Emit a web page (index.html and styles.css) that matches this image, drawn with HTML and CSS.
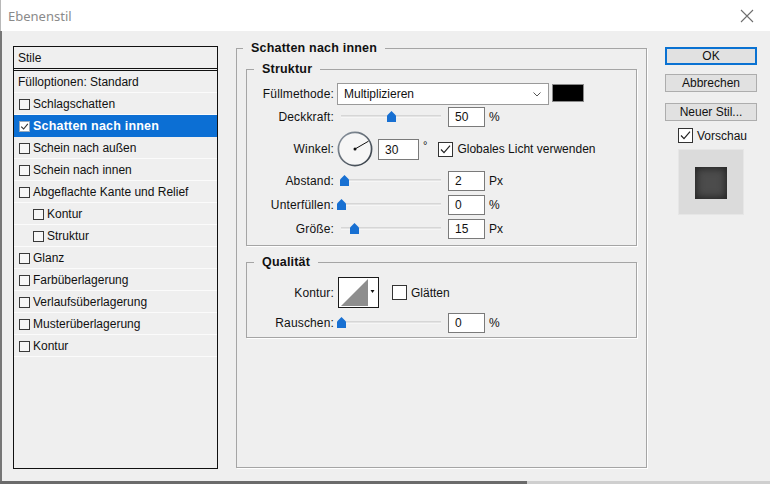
FILE: index.html
```html
<!DOCTYPE html>
<html lang="de">
<head>
<meta charset="utf-8">
<title>Ebenenstil</title>
<link rel="stylesheet" href="styles.css">
</head>
<body>
<div class="window">
  <header class="titlebar">
    <span class="title">Ebenenstil</span>
    <svg class="close" width="14" height="14" viewBox="0 0 14 14"><path d="M1 1L13 13M13 1L1 13" stroke="#6e6e6e" stroke-width="1.1" fill="none"/></svg>
  </header>
  <main class="body">
    <nav class="styles">
      <div class="styles-head">Stile</div>
      <div class="row first">Fülloptionen: Standard</div>
      <div class="row"><span class="cb"></span>Schlagschatten</div>
      <div class="row sel"><span class="cb on"><svg width="9" height="9" viewBox="0 0 9 9"><path d="M1.2 4.6L3.6 7L7.8 1.8" stroke="#333" stroke-width="1.1" fill="none"/></svg></span>Schatten nach innen</div>
      <div class="row"><span class="cb"></span>Schein nach außen</div>
      <div class="row"><span class="cb"></span>Schein nach innen</div>
      <div class="row"><span class="cb"></span>Abgeflachte Kante und Relief</div>
      <div class="row sub"><span class="cb"></span>Kontur</div>
      <div class="row sub"><span class="cb"></span>Struktur</div>
      <div class="row"><span class="cb"></span>Glanz</div>
      <div class="row"><span class="cb"></span>Farbüberlagerung</div>
      <div class="row"><span class="cb"></span>Verlaufsüberlagerung</div>
      <div class="row"><span class="cb"></span>Musterüberlagerung</div>
      <div class="row"><span class="cb"></span>Kontur</div>
    </nav>

    <fieldset class="group outer">
      <legend>Schatten nach innen</legend>

      <fieldset class="group inner struktur">
        <legend>Struktur</legend>
        <div class="frow r-mode">
          <span class="lbl">Füllmethode:</span>
          <div class="select"><span>Multiplizieren</span><svg width="8" height="5" viewBox="0 0 8 5"><path d="M0.5 0.5L4 4L7.5 0.5" stroke="#555" fill="none"/></svg></div>
          <span class="swatch"></span>
        </div>
        <div class="frow r-opacity">
          <span class="lbl">Deckkraft:</span>
          <div class="slider"><span class="track"></span><span class="thumb" style="left: 50px"></span></div>
          <span class="num">50</span><span class="unit">%</span>
        </div>
        <div class="frow r-angle">
          <span class="lbl">Winkel:</span>
          <svg class="dial" width="36" height="36" viewBox="0 0 36 36">
            <defs><linearGradient id="dg" x1="0" y1="0" x2="1" y2="1"><stop offset="0" stop-color="#8e98a3"/><stop offset="1" stop-color="#323a42"/></linearGradient></defs>
            <circle cx="18" cy="18" r="16.6" fill="#f6f6f6" stroke="url(#dg)" stroke-width="1.7"/>
            <line x1="18" y1="18" x2="31.5" y2="10.2" stroke="#111" stroke-width="1"/>
            <circle cx="18" cy="18" r="1.5" fill="#111"/>
          </svg>
          <span class="num angle">30</span><span class="deg">°</span>
          <span class="check big on"><svg width="13" height="13" viewBox="0 0 13 13"><path d="M2 6.5L5 9.6L11 2.6" stroke="#222" stroke-width="1.2" fill="none"/></svg></span>
          <span class="clabel">Globales Licht verwenden</span>
        </div>
        <div class="frow r-s">
          <span class="lbl">Abstand:</span>
          <div class="slider"><span class="track"></span><span class="thumb" style="left: 3px"></span></div>
          <span class="num">2</span><span class="unit">Px</span>
        </div>
        <div class="frow r-s">
          <span class="lbl">Unterfüllen:</span>
          <div class="slider"><span class="track"></span><span class="thumb" style="left: 0px"></span></div>
          <span class="num">0</span><span class="unit">%</span>
        </div>
        <div class="frow r-s">
          <span class="lbl">Größe:</span>
          <div class="slider"><span class="track"></span><span class="thumb" style="left: 13px"></span></div>
          <span class="num">15</span><span class="unit">Px</span>
        </div>
      </fieldset>

      <fieldset class="group inner quali">
        <legend>Qualität</legend>
        <div class="frow r-contour">
          <span class="lbl">Kontur:</span>
          <svg class="contour" width="41" height="31" viewBox="0 0 41 31">
            <rect x="0.5" y="0.5" width="40" height="30" fill="#fff" stroke="#1a1a1a"/>
            <polygon points="3,29 30,2 30,29" fill="#8e8e8e"/>
            <polygon points="32.5,13 36.5,13 34.5,16" fill="#111"/>
          </svg>
          <span class="check big glatt"></span>
          <span class="clabel">Glätten</span>
        </div>
        <div class="frow r-noise">
          <span class="lbl">Rauschen:</span>
          <div class="slider"><span class="track"></span><span class="thumb" style="left: 0px"></span></div>
          <span class="num">0</span><span class="unit">%</span>
        </div>
      </fieldset>
    </fieldset>

    <aside class="actions">
      <div class="btn primary">OK</div>
      <div class="btn">Abbrechen</div>
      <div class="btn">Neuer Stil...</div>
      <div class="preview-toggle">
        <span class="check big on"><svg width="13" height="13" viewBox="0 0 13 13"><path d="M2 6.5L5 9.6L11 2.6" stroke="#222" stroke-width="1.2" fill="none"/></svg></span>
        <span class="clabel">Vorschau</span>
      </div>
      <div class="preview"><div class="preview-square"></div></div>
    </aside>
  </main>
  <div class="strip"><span class="strip-dark"></span><span class="strip-light"></span></div>
</div>
</body>
</html>
```

FILE: styles.css
```css
* { box-sizing: border-box; }
html, body { margin: 0; padding: 0; }
body {
  width: 770px;
  height: 484px;
  overflow: hidden;
  font-family: "Liberation Sans", Arial, sans-serif;
  font-size: 12px;
  color: #111;
  background: #efefef;
}
.window { display: flex; flex-direction: column; height: 484px; }

.titlebar {
  height: 31px;
  flex: none;
  background: #fff;
  display: flex;
  align-items: center;
  justify-content: space-between;
  padding: 0 16px 0 7px;
  border-left: 1px solid #b8b8b8;
}
.title { font-family: "Noto Sans", sans-serif; font-size: 13px; color: #8a8a8a; }

.body {
  flex: 1;
  display: flex;
  align-items: flex-start;
  background: #efefef;
  border-left: 2px solid #767676;
  padding-left: 11px;
}

/* left style list */
.styles {
  width: 205px;
  height: 423px;
  margin-top: 15px;
  border: 1px solid #111;
  flex: none;
}
.styles-head {
  height: 24px;
  line-height: 22px;
  padding-left: 4px;
  border-bottom: 3px double #111;
}
.row {
  height: 22px;
  display: flex;
  align-items: center;
  padding-left: 5px;
  padding-top: 1px;
  border-bottom: 1px solid #fbfbfb;
  white-space: nowrap;
}
.row.first { padding-left: 4px; }
.row.sub { padding-left: 19px; }
.row.sel {
  background: #0c6fd4;
  border-bottom-color: #0c6fd4;
  color: #fff;
  font-weight: bold;
  font-size: 12.5px;
  letter-spacing: 0.2px;
}
.cb {
  width: 11px;
  height: 11px;
  border: 1px solid #3a3a3a;
  background: #f7f7f7;
  margin-right: 3px;
  display: flex;
  align-items: center;
  justify-content: center;
  flex: none;
}
.cb.on { background: #fff; border-color: #9ab; }

/* group boxes */
.group {
  border: 1px solid #a5a5a5;
  margin: 0;
  padding: 0;
  min-width: 0;
  box-shadow: 1px 1px 0 #fff;
}
.group > legend {
  padding: 0 8px;
  font-weight: bold;
  font-size: 12.5px;
  letter-spacing: 0.2px;
  line-height: 14px;
  color: #111;
}
.outer {
  width: 411px;
  height: 427px;
  margin: 10px 0 0 18px;
  flex: none;
}
.outer > legend { margin-left: 6px; }
.inner { margin: 7px 9px 0 9px; }
.inner > legend { margin-left: 7px; }
.struktur { padding-bottom: 6px; }
.quali { margin-top: 9px; padding-bottom: 4px; }

.frow { display: flex; align-items: center; white-space: nowrap; }
.lbl { width: 87px; text-align: right; flex: none; letter-spacing: 0.15px; }

.r-mode { height: 22px; margin-top: 7px; }
.r-opacity { height: 20px; margin-top: 2px; }
.r-angle { height: 36px; margin-top: 4px; }
.r-s { height: 20px; margin-top: 4px; }
.r-contour { height: 31px; margin-top: 8px; }
.r-noise { height: 20px; margin-top: 5px; }

.select {
  margin-left: 3px;
  width: 212px;
  height: 22px;
  background: #fff;
  border: 1px solid #9a9a9a;
  display: flex;
  align-items: center;
  justify-content: space-between;
  padding: 0 7px 0 6px;
}
.swatch {
  margin-left: 3px;
  width: 32px;
  height: 18px;
  background: #000;
  border: 1px solid #8a8a8a;
  margin-top: -2px;
}

.slider {
  position: relative;
  margin-left: 3px;
  width: 104px;
  height: 12px;
  flex: none;
}
.track {
  position: absolute;
  left: 4px;
  right: 0;
  top: 4px;
  height: 3px;
  background: #e4e4e4;
  border-top: 1px solid #d6d6d6;
  border-bottom: 1px solid #f6f6f6;
}
.thumb {
  position: absolute;
  top: 0;
  width: 9px;
  height: 11px;
  background: #1870d2;
  clip-path: polygon(0 40%, 50% 0, 100% 40%, 100% 100%, 0 100%);
  border-radius: 2px 2px 0 0;
}

.num {
  margin-left: 7px;
  width: 37px;
  height: 20px;
  background: #fff;
  border: 1px solid #7a7a7a;
  padding-left: 6px;
  line-height: 18px;
  flex: none;
}
.unit { margin-left: 4px; }

.dial { margin-left: 3px; flex: none; }
.num.angle { margin-left: 5px; width: 41px; height: 21px; line-height: 20px; }
.deg { margin-left: 4px; align-self: flex-start; margin-top: 9px; font-size: 11px; line-height: 11px; }

.check {
  width: 15px;
  height: 15px;
  border: 1px solid #333;
  background: #fff;
  display: flex;
  align-items: center;
  justify-content: center;
  flex: none;
}
.r-angle .check { margin-left: 11px; }
.clabel { margin-left: 4px; }

.contour { margin-left: 4px; flex: none; }
.check.glatt { margin-left: 13px; }

/* right action column */
.actions {
  width: 92px;
  margin: 16px 0 0 18px;
  flex: none;
  display: flex;
  flex-direction: column;
}
.btn {
  height: 18px;
  background: #e1e1e1;
  border: 1px solid #adadad;
  display: flex;
  align-items: center;
  justify-content: center;
  margin-bottom: 11px;
}
.btn.primary { border: 2px solid #0a72d2; margin-bottom: 9px; }
.btn:nth-child(3) { margin-bottom: 0; }
.preview-toggle {
  display: flex;
  align-items: center;
  margin: 7px 0 0 13px;
}
.preview {
  margin: 6px 0 0 13px;
  width: 66px;
  height: 66px;
  background: #dbdbdb;
  border: 1px solid #e6e6e6;
  padding: 17px 0 0 16px;
}
.preview-square {
  width: 32px;
  height: 32px;
  background: #4c4c4c;
  box-shadow: inset 0 0 7px 2px #262626;
}

.strip { height: 3px; display: flex; flex: none; }
.strip-dark { width: 527px; background: #6b6b6b; }
.strip-light { flex: 1; background: #cfcfcf; }
```
